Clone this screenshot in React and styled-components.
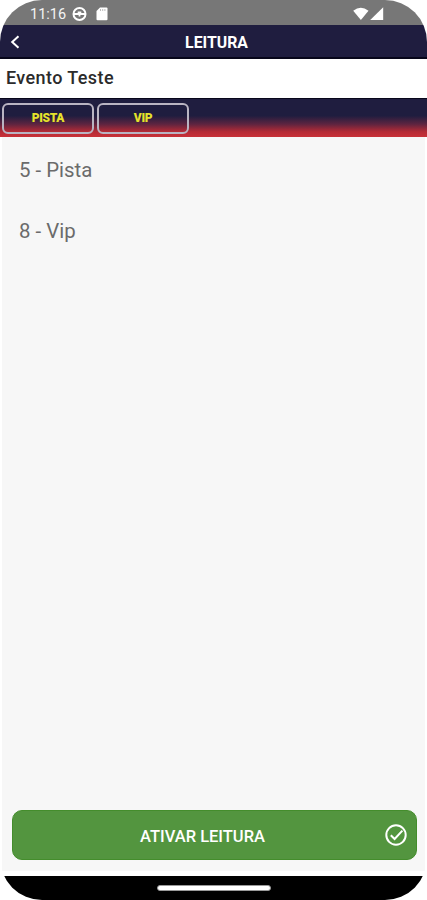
import styled, { createGlobalStyle } from 'styled-components';

const GlobalStyle = createGlobalStyle`
  * {
    box-sizing: border-box;
  }

  body {
    margin: 0;
    background: #fff;
    font-family: Roboto, sans-serif;
  }

  svg {
    display: block;
  }
`;

const Screen = styled.div`
  display: flex;
  flex-direction: column;
  width: 427px;
  height: 900px;
  overflow: hidden;
  background-color: #fff;
  border-radius: 42px;
`;

const StatusBar = styled.div`
  display: flex;
  align-items: center;
  justify-content: space-between;
  height: 25px;
  padding: 3px 43px 0 30px;
  background-color: #777;
  color: #fff;
`;

const StatusGroup = styled.div`
  display: flex;
  align-items: center;
  gap: ${props => props.$gap}px;
`;

const Clock = styled.span`
  width: 37px;
  padding-top: 1px;
  font-size: 14.5px;
  line-height: 21px;
  color: #f4f4f4;
`;

const Header = styled.header`
  display: grid;
  grid-template-columns: 30px 1fr 24px;
  align-items: center;
  height: 34px;
  padding-top: 2px;
  background-color: #1f1d3f;
  border-bottom: 2px solid #07061a;
  color: #fff;

  h1 {
    margin: 0;
    padding-top: 1px;
    font-size: 15.8px;
    font-weight: 700;
    text-align: center;
  }
`;

const BackButton = styled.button`
  height: 30px;
  padding: 0 0 0 9px;
  background: none;
  border: none;
  color: #fff;
`;

const EventName = styled.h2`
  height: 39px;
  margin: 0;
  padding: 0 6px;
  font-size: 18px;
  font-weight: 500;
  line-height: 38px;
  letter-spacing: 0.4px;
  color: #2b2b2b;
`;

const Sectors = styled.div`
  display: flex;
  gap: 3px;
  height: 39px;
  padding: 4px 2px;
  border-top: 1px solid #08071b;
  background: linear-gradient(#1f1d3f 0%, #1f1d3f 44%, #5d2440 66%, #b52b36 86%, #c93138 100%);
`;

const SectorTag = styled.button`
  width: 92px;
  height: 31px;
  padding: 0 0 1px;
  background: none;
  border: 2px solid #b9b4c2;
  border-radius: 6px;
  font-family: inherit;
  font-size: 12px;
  font-weight: 900;
  letter-spacing: -0.3px;
  color: #e6e22b;
`;

const Content = styled.main`
  flex: 1;
  margin: 0 2px;
  padding: 3px 17px;
  background-color: #f7f7f7;
`;

const Item = styled.p`
  margin: 0;
  height: 61px;
  font-size: 20.4px;
  line-height: 60px;
  color: #6b6b6b;
`;

const Footer = styled.footer`
  height: 66px;
  margin: 0 2px 5px;
  padding: 5px 8px 0 10px;
  background-color: #f7f7f7;
`;

const ActivateButton = styled.button`
  display: grid;
  grid-template-columns: 22px 1fr 22px;
  align-items: center;
  width: 100%;
  height: 50px;
  padding: 0 9px;
  background-color: #53953f;
  border: 1px solid #448d2c;
  border-radius: 10px;
  font-family: inherit;
  font-size: 16.5px;
  font-weight: 500;
  color: #fff;

  span {
    grid-column: 2;
    padding-right: 24px;
    padding-top: 2px;
  }
`;

const NavigationBar = styled.div`
  display: flex;
  justify-content: center;
  height: 24px;
  padding-top: 9px;
  background-color: #000;

  div {
    width: 114px;
    height: 6px;
    border-radius: 3px;
    background-color: #fff;
    border: 1px solid #999;
  }
`;

const WheelIcon = () => (
  <svg width="15" height="15" viewBox="0 0 15 15" fill="none" stroke="#fff">
    <circle cx="7.5" cy="7" r="6" strokeWidth="2" />
    <path d="M1.5 7h12" strokeWidth="2" />
    <path d="M5.7 5.4h3.6M7.5 7v2.5" strokeWidth="1.8" />
  </svg>
);

const CardIcon = () => (
  <svg width="12" height="14" viewBox="0 0 12 14">
    <path d="M4 .6h6.5q1 0 1 1v10.6q0 1-1 1h-9q-1 0-1-1V4.1z" fill="#fff" />
    <path d="M4.5 2v2M6.7 2v2M8.9 2v2" stroke="#aaa" strokeWidth=".8" />
  </svg>
);

const WifiIcon = () => (
  <svg width="17" height="14" viewBox="0 0 17 14" fill="#fff">
    <path d="M.2 3.7Q7.8-2.4 15.5 3.7L7.9 13z" />
  </svg>
);

const SignalIcon = () => (
  <svg width="14" height="14" viewBox="0 0 14 14" fill="#fff">
    <path d="M13.2.2V13H.2z" />
  </svg>
);

const BackIcon = () => (
  <svg width="12" height="16" viewBox="0 0 12 16" fill="none" stroke="currentColor" strokeWidth="2">
    <path d="M9.5 2.2 3.2 8l6.3 5.8" />
  </svg>
);

const CheckIcon = () => (
  <svg width="22" height="22" viewBox="0 0 22 22" fill="none" stroke="currentColor" strokeWidth="2">
    <circle cx="11" cy="11" r="9.7" />
    <path d="m5.8 11.2 3.8 3.8 7.8-8.4" />
  </svg>
);

const App = () => (
  <>
    <GlobalStyle />
    <Screen>
      <StatusBar>
        <StatusGroup $gap={5}>
          <Clock>11:16</Clock>
          <StatusGroup $gap={9}>
            <WheelIcon />
            <CardIcon />
          </StatusGroup>
        </StatusGroup>
        <StatusGroup $gap={0}>
          <WifiIcon />
          <SignalIcon />
        </StatusGroup>
      </StatusBar>

      <Header>
        <BackButton type="button" aria-label="Voltar"><BackIcon /></BackButton>
        <h1>LEITURA</h1>
      </Header>

      <EventName>Evento Teste</EventName>

      <Sectors>
        <SectorTag type="button">PISTA</SectorTag>
        <SectorTag type="button">VIP</SectorTag>
      </Sectors>

      <Content>
        <Item>5 - Pista</Item>
        <Item>8 - Vip</Item>
      </Content>

      <Footer>
        <ActivateButton type="button">
          <span>ATIVAR LEITURA</span>
          <CheckIcon />
        </ActivateButton>
      </Footer>

      <NavigationBar><div /></NavigationBar>
    </Screen>
  </>
);

export default App;
